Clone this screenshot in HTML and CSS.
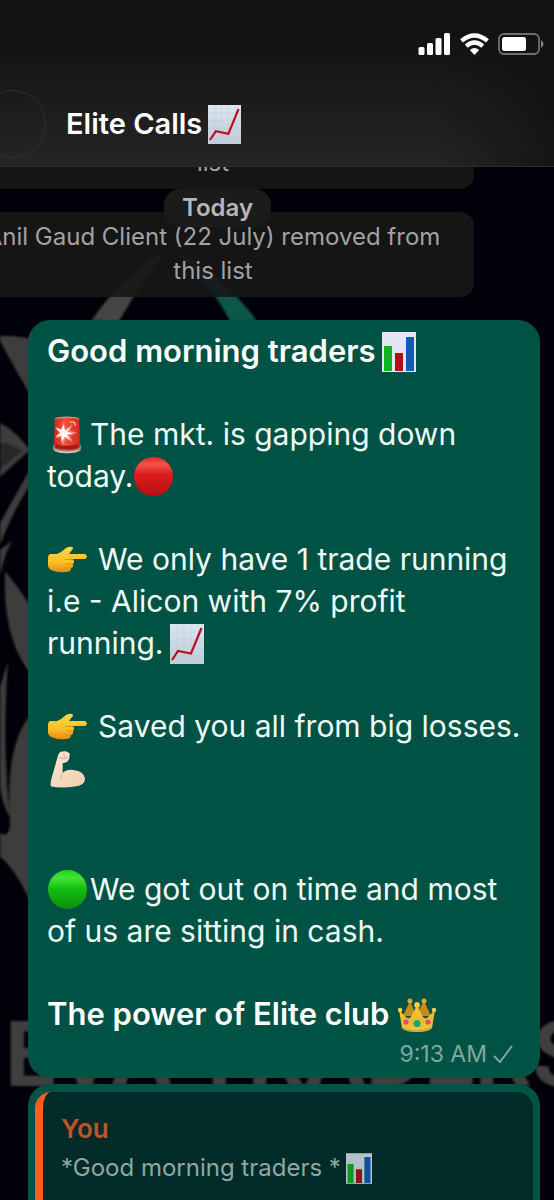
FILE: index.html
```html
<!DOCTYPE html>
<html lang="en">
<head>
<meta charset="utf-8">
<meta name="viewport" content="width=device-width, initial-scale=1">
<title>Elite Calls</title>
<link rel="stylesheet" href="styles.css">
</head>
<body>
<svg class="defs" aria-hidden="true">
  <defs>
    <linearGradient id="paper" x2="0" y2="1"><stop stop-color="#d9e6ef"/><stop offset="1" stop-color="#bfccd9"/></linearGradient>
    <linearGradient id="red" x2="0" y2="1"><stop stop-color="#e8201f"/><stop offset=".18" stop-color="#f4564c"/><stop offset=".45" stop-color="#dc1c1c"/><stop offset="1" stop-color="#b80f12"/></linearGradient>
    <linearGradient id="green" x2="0" y2="1"><stop stop-color="#1fd01a"/><stop offset=".2" stop-color="#43e336"/><stop offset=".5" stop-color="#13bd10"/><stop offset="1" stop-color="#0b8d0b"/></linearGradient>
    <linearGradient id="hand" x2="0" y2="1"><stop stop-color="#ffd94a"/><stop offset=".6" stop-color="#fdbf26"/><stop offset="1" stop-color="#e28a12"/></linearGradient>
    <linearGradient id="gold" x2="0" y2="1"><stop stop-color="#f6c63c"/><stop offset=".6" stop-color="#f0b92e"/><stop offset="1" stop-color="#e9cd3e"/></linearGradient>
    <linearGradient id="skin" x2="1" y2="1"><stop stop-color="#fbe6cf"/><stop offset="1" stop-color="#f3cfb2"/></linearGradient>
    <linearGradient id="dome"><stop stop-color="#c9261f"/><stop offset=".4" stop-color="#f4523f"/><stop offset="1" stop-color="#cf2a20"/></linearGradient>
    <symbol id="rise" viewBox="0 0 34 40">
      <path fill="url(#paper)" d="M0 0h34v40H0z"/>
      <path d="M7 0v40M14 0v40M21 0v40M28 0v40M0 8h34M0 16h34M0 24h34M0 32h34" stroke="#b3c5d6" stroke-width=".6" opacity=".6"/>
      <path d="M2 36 8 27 21 29.500 31.500 4" fill="none" stroke="#bd0e1c" stroke-width="2.200"/>
    </symbol>
    <symbol id="bars" viewBox="0 0 34 40">
      <path fill="#e2e7f3" d="M0 0h34v40H0z"/>
      <path fill="#12b320" d="M2 14h8v25H2z"/><path fill="#b01018" d="M13 21h8v18h-8z"/><path fill="#1459b8" d="M24 5h8v34h-8z"/>
    </symbol>
    <symbol id="siren" viewBox="0 0 32 40">
      <path fill="#8c8f86" d="M1 31q15 5 30 0v5q-2 4-15 4T1 36z"/>
      <path fill="#c9c4b4" d="M2 36q14 4 28 0-3 4-14 4T2 36z"/>
      <path fill="url(#dome)" d="M3 4Q4 1 16 1t13 3l1 29q-3 4-14 4T2 33z"/>
      <path d="M3 4q1-2.500 13-2.500T29 4" fill="none" stroke="#e0a396"/>
      <path fill="#a81a16" d="M4 30q12 4 24 0v4q-11 4-24 0z"/>
      <path fill="#f98876" d="m12 6 3 8 7-5-3 7 8 2-8 3 3 7-7-4-4 8-1-9-7 1 5-6-5-6 8 2z"/>
      <path fill="#fff" d="m12 9 2 7 6-4-4 5 7 2-7 1 3 6-5-4-4 6v-7l-6 1 5-4-5-5 6 2z"/>
      <path d="M19 7q6-2 6 4" stroke="#ffb4a4" fill="none" stroke-width="1.500"/>
    </symbol>
    <symbol id="point" viewBox="0 0 40 27">
      <path fill="url(#hand)" d="M1 12q0-4 3-4h6q5-2 9-6 4-2 6-1 2 1 0 3l-3 4h16q2 1 2 2.500T38 13H26q2 3 0 5 1 3-2 4 0 4-5 4-7 1-12-1-5-1-6-5z"/>
      <path d="M18 13.500h8M19 18h7M18 22h6" stroke="#d88b13" stroke-width=".9" fill="none"/>
    </symbol>
    <symbol id="muscle" viewBox="0 0 38 38">
      <path fill="url(#skin)" d="M1 37q-1-3 1-10L8 6q1-5 5-5 3-1 6 1 2 1 1 4 0 4-3 6l-4 1 0 10q4-4 11-3 11 1 12 9 0 7-11 8-13 2-24 0z"/>
      <path d="M10 7q4 3 8 0M14 3l1 4m-3 17q-1 3 0 5" fill="none" stroke="#d7a98b"/>
    </symbol>
    <symbol id="crown" viewBox="0 0 38 34">
      <path fill="#c78a1d" d="m5 18 7-15 6 14 8-14 7 15z"/>
      <g fill="#dca43a"><circle cx="12" cy="3" r="2.500"/><circle cx="26" cy="3" r="2.500"/></g>
      <path fill="url(#gold)" d="m4 30-3-18 8 8q2 1 4-1l6-12 6 12q2 2 4 1l8-8-3 18q-3 4-15 4T4 30z"/>
      <g fill="#f6cb4a"><circle cx="2" cy="12" r="2.300"/><circle cx="19" cy="7" r="2.900"/><circle cx="36" cy="12" r="2.300"/></g>
      <circle cx="19" cy="25.500" r="3.600" fill="#17a67c"/><circle cx="8" cy="24" r="2.600" fill="#e44a78"/><circle cx="30" cy="24" r="2.600" fill="#e44a78"/>
      <path d="M5 30q14 6 28 0" stroke="#b98618" fill="none" stroke-width=".8"/>
    </symbol>
  </defs>
</svg>

<header class="header">
  <div class="status" aria-label="Status">
    <svg class="signal" viewBox="0 0 32 22" fill="#fff"><rect y="14" width="6" height="8" rx="1.500"/><rect x="8.500" y="10" width="6" height="12" rx="1.500"/><rect x="17" y="5" width="6" height="17" rx="1.500"/><rect x="25.500" width="6" height="22" rx="1.500"/></svg>
    <svg class="wifi" viewBox="0 0 28 21"><g fill="none" stroke="#fff" stroke-width="4.200"><path d="M1.500 7.500Q14-2.800 26.500 7.500"/><path d="M6 12.500Q14 5.800 22 12.500"/></g><path fill="#fff" d="M9.500 16.200q4.500-3.600 9 0L14 21z"/></svg>
    <svg class="battery" viewBox="0 0 46 22"><rect x="1" y="1" width="40" height="20" rx="5" fill="none" stroke="#707070" stroke-width="1.800"/><rect x="4" y="4" width="24" height="14" rx="2.500" fill="#fff"/><path fill="#858585" d="M43 7q5 4 0 8z"/></svg>
  </div>
  <div class="contact">
    <div class="avatar"></div>
    <h1 class="title">Elite Calls<svg class="title-emoji" role="img" aria-label="chart increasing"><use href="#rise"/></svg></h1>
  </div>
</header>

<main class="chat">
  <div class="wallpaper" aria-hidden="true">
    <svg class="emblem" viewBox="0 0 554 1034" preserveAspectRatio="xMinYMin meet">
      <path fill="#474444" d="M168 82Q125 105 91 154h28q23-40 49-72z"/>
      <path fill="#0d5748" d="M172 82q36 30 58 72h27q-28-40-85-72z"/>
      <g fill="#3d3d3d">
        <path d="M0 169q16-1 40 5v70Q18 208 0 174z"/>
        <path d="M0 256q16 8 30 27L0 310z"/>
        <path d="M30 302v16Q14 342 0 378v-22z"/>
        <path d="M13 373Q5 384 0 410v-27z"/>
        <path d="M5 404q10 12 25 34v68Q2 470 5 404z"/>
        <path d="M8 494Q2 580 10 650 3 640 0 620V520z"/>
        <path d="M30 548Q5 580 10 652q1 20-10 14v24q14 10 30 44z"/>
      </g>
      <path fill="#272727" d="M0 276q12 0 22 8L0 302z"/>
    </svg>
    <div class="wordmark">EVA TRADERS</div>
  </div>

  <p class="notice notice-first">list</p>
  <div class="day">Today</div>
  <p class="notice">Anil Gaud Client (22 July) removed from<br>this list</p>

  <article class="bubble">
    <p><strong>Good morning traders</strong><svg class="emoji card" role="img" aria-label="bar chart"><use href="#bars"/></svg></p>
    <p><svg class="emoji siren" role="img" aria-label="siren"><use href="#siren"/></svg>The mkt. is gapping down<br>today.<svg class="emoji ball" viewBox="0 0 38 38" role="img" aria-label="red circle"><circle cx="19" cy="19" r="19" fill="url(#red)"/></svg></p>
    <p><svg class="emoji point" role="img" aria-label="pointing right"><use href="#point"/></svg>We only have 1 trade running<br>i.e - Alicon with 7% profit<br>running.<svg class="emoji card" role="img" aria-label="chart increasing"><use href="#rise"/></svg></p>
    <p><svg class="emoji point" role="img" aria-label="pointing right"><use href="#point"/></svg>Saved you all from big losses.<br><svg class="emoji muscle" role="img" aria-label="flexed arm"><use href="#muscle"/></svg></p>
    <p class="apart"><svg class="emoji ball" viewBox="0 0 38 38" role="img" aria-label="green circle"><circle cx="19" cy="19" r="19" fill="url(#green)"/></svg>We got out on time and most<br>of us are sitting in cash.</p>
    <p><strong>The power of Elite club</strong><svg class="emoji crown" role="img" aria-label="crown"><use href="#crown"/></svg></p>
    <footer class="meta"><time>9:13 AM</time><svg class="tick" viewBox="0 0 20 18" role="img" aria-label="sent"><path d="m1 11 6 6L19 1" fill="none" stroke="#7fa8a0" stroke-width="2"/></svg></footer>
  </article>

  <article class="bubble reply">
    <blockquote class="quote">
      <div class="author">You</div>
      <div class="excerpt">*Good morning traders *<svg class="small-card" role="img" aria-label="bar chart"><use href="#bars"/></svg></div>
    </blockquote>
  </article>
</main>
</body>
</html>
```
FILE: styles.css
```css
* { box-sizing: border-box; }
body {
  margin: 0;
  height: 100vh;
  display: flex;
  flex-direction: column;
  overflow: hidden;
  background: #010109;
  color: #eefcf8;
  font-family: Inter, "Liberation Sans", sans-serif;
}
p, h1, blockquote { margin: 0; }
.defs { position: absolute; width: 0; height: 0; }

.header {
  flex: none;
  background: linear-gradient(90deg, transparent 78%, rgba(18, 18, 18, .8)), linear-gradient(#121212 20%, #252525);
  border-bottom: 1px solid #2b2b2b;
}
.status {
  display: flex;
  justify-content: flex-end;
  gap: 9px;
  padding: 33px 10px 0 0;
}
.signal { width: 33px; height: 22px; }
.wifi { width: 29px; height: 22px; }
.battery { width: 46px; height: 22px; }
.contact {
  display: flex;
  align-items: center;
  gap: 20px;
  margin-left: -22px;
  padding: 35px 0 8px;
}
.avatar {
  width: 68px;
  height: 68px;
  border: 1px solid #303030;
  border-radius: 50%;
}
.title {
  display: flex;
  align-items: center;
  gap: 6px;
  color: #fff;
  font-size: 29px;
  font-weight: 600;
  line-height: 40px;
}
.title-emoji { width: 33px; height: 39px; }

.chat {
  position: relative;
  flex: 1;
  min-height: 0;
  display: flex;
  flex-direction: column;
  overflow: hidden;
}
.wallpaper { position: absolute; inset: 0; filter: blur(1px); }
.emblem { display: block; width: 554px; height: 1034px; }
.wordmark {
  position: absolute;
  top: 839px;
  left: 5px;
  color: #3f3f40;
  font: 700 90px/100px Roboto, sans-serif;
  white-space: nowrap;
}

.notice {
  position: relative;
  flex: none;
  margin: 0 80px 23px -48px;
  padding: 8px 0 9px;
  border-radius: 14px;
  background: rgba(23, 23, 24, .9);
  color: #a2a2a4;
  font-size: 24px;
  line-height: 34px;
  text-align: center;
  white-space: nowrap;
}
.notice-first { margin-top: -29px; }
.day {
  position: absolute;
  top: 22px;
  left: 164px;
  z-index: 1;
  padding: 2px 18px;
  border-radius: 16px;
  background: #1b1b1b;
  color: #b6b6b6;
  font-size: 24px;
  font-weight: 600;
  line-height: 34px;
}

.bubble {
  position: relative;
  flex: none;
  margin: 0 14px 6px 28px;
  padding: 10px 19px 5px;
  border-radius: 22px;
  background: #005245;
  font-size: 30px;
  line-height: 42px;
  white-space: nowrap;
}
.bubble p + p { margin-top: 41px; }
.bubble p + .apart { margin-top: 79px; }
.bubble strong { font-size: 31px; font-weight: 600; color: #fff; }
.emoji { vertical-align: middle; margin: -8px 0 -4px; }
.card { width: 34px; height: 40px; margin-left: 6px; }
.siren { width: 30px; height: 39px; margin-left: 5px; margin-right: 8px; }
.ball { width: 39px; height: 39px; margin-left: 1px; margin-right: 3px; }
.point { width: 40px; height: 27px; margin-right: 11px; }
.muscle { width: 37px; height: 38px; margin-left: 3px; }
.crown { width: 38px; height: 34px; margin-left: 9px; }
.meta {
  display: flex;
  justify-content: flex-end;
  align-items: center;
  gap: 6px;
  padding-right: 8px;
  color: #7fa8a0;
  font-size: 23px;
  line-height: 38px;
}
.tick { width: 20px; height: 18px; }

.reply {
  flex: 1 0 auto;
  display: flex;
  margin-bottom: -24px;
  padding: 8px 7px;
}
.quote {
  flex: 1;
  padding: 18px;
  border-left: 8px solid #ff5e1f;
  border-radius: 16px;
  background: #002b28;
  line-height: 38px;
}
.author { color: #c4502e; font-size: 26px; font-weight: 600; }
.excerpt {
  display: flex;
  align-items: center;
  gap: 5px;
  color: #8fa8a4;
  font-size: 24px;
  line-height: 40px;
}
.small-card { width: 26px; height: 31px; opacity: .8; }
```
